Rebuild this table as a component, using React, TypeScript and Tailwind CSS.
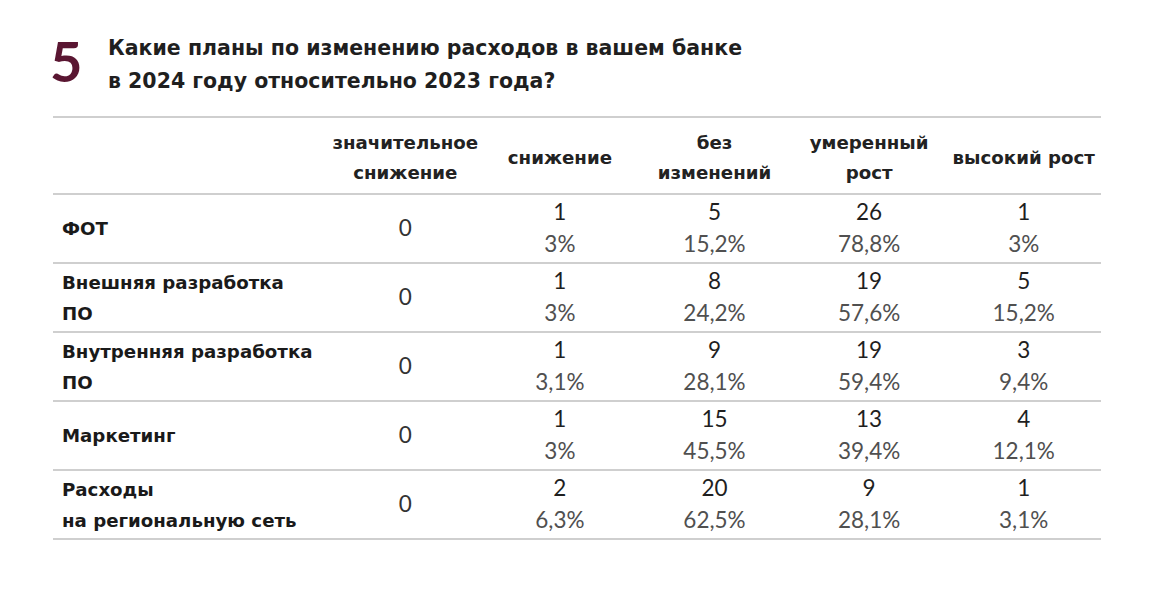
import React from "react";

const cols = [
  ["значительное", "снижение"],
  ["снижение"],
  ["без", "изменений"],
  ["умеренный", "рост"],
  ["высокий рост"],
];

type Cell = [string, string] | null;
const rows: { label: string[]; cells: Cell[] }[] = [
  { label: ["ФОТ"], cells: [null, ["1", "3%"], ["5", "15,2%"], ["26", "78,8%"], ["1", "3%"]] },
  { label: ["Внешняя разработка", "ПО"], cells: [null, ["1", "3%"], ["8", "24,2%"], ["19", "57,6%"], ["5", "15,2%"]] },
  { label: ["Внутренняя разработка", "ПО"], cells: [null, ["1", "3,1%"], ["9", "28,1%"], ["19", "59,4%"], ["3", "9,4%"]] },
  { label: ["Маркетинг"], cells: [null, ["1", "3%"], ["15", "45,5%"], ["13", "39,4%"], ["4", "12,1%"]] },
  { label: ["Расходы", "на региональную сеть"], cells: [null, ["2", "6,3%"], ["20", "62,5%"], ["9", "28,1%"], ["1", "3,1%"]] },
];

export default function App() {
  return (
    <div className="w-[1169px] h-[616px] bg-white font-['Lato',sans-serif] text-[#1a1a1a]">
      <div className="flex pt-[32px] pl-[50px]">
        <div className="text-[56px] leading-[56px] font-bold text-[#5a1632] w-[58px] pt-[1px]">5</div>
        <div className="font-['DejaVu_Sans',sans-serif] text-[20.5px] leading-[33px] font-bold text-[#1f1f1f]">
          <div>Какие планы по изменению расходов в вашем банке</div>
          <div>в 2024 году относительно 2023 года?</div>
        </div>
      </div>
      <div className="ml-[53px] mt-[18px] w-[1048px] border-t-2 border-[#cfcfcf]">
        <div className="grid grid-cols-[275px_repeat(5,1fr)] h-[77px] pt-[5px] items-center border-b-2 border-[#cfcfcf]">
          <div />
          {cols.map((c, i) => (
            <div key={i} className="font-['DejaVu_Sans',sans-serif] text-center text-[18.2px] leading-[30px] font-bold text-[#222]">
              {c.map((l, j) => (
                <div key={j}>{l}</div>
              ))}
            </div>
          ))}
        </div>
        {rows.map((r, i) => (
          <div
            key={i}
            className="grid grid-cols-[275px_repeat(5,1fr)] h-[69px] items-center border-b-2 border-[#cfcfcf]"
          >
            <div className="font-['DejaVu_Sans',sans-serif] pl-[9px] text-[18.2px] leading-[31px] font-bold text-[#1a1a1a]">
              {r.label.map((l, j) => (
                <div key={j}>{l}</div>
              ))}
            </div>
            {r.cells.map((c, j) => (
              <div key={j} className="text-center text-[22.5px] leading-[32px] font-normal pb-[1px]">
                {c === null ? (
                  <div className="text-[#333]">0</div>
                ) : (
                  <>
                    <div className="text-[#1f1f1f]">{c[0]}</div>
                    <div className="text-[#505050]">{c[1]}</div>
                  </>
                )}
              </div>
            ))}
          </div>
        ))}
      </div>
    </div>
  );
}
